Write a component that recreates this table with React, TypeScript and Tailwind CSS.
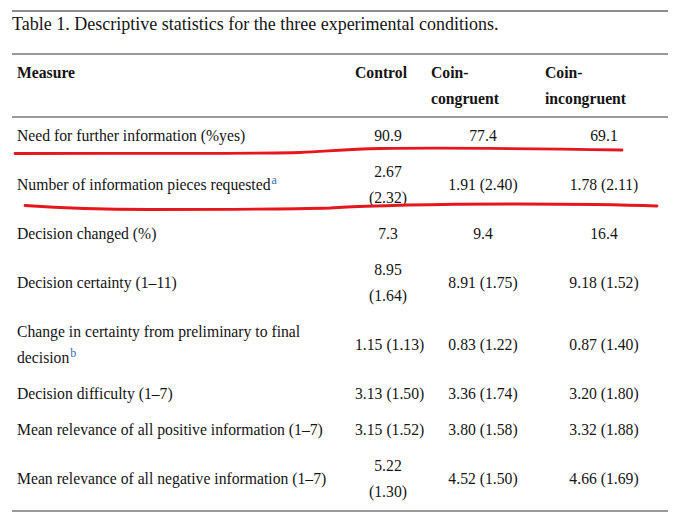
import React from 'react';

type Row = {
  measure: React.ReactNode;
  values: string[][];
};

const Sup = ({ children }: { children: React.ReactNode }) => (
  <sup className="text-[12px] text-[#2f6db5] ml-[1px]">{children}</sup>
);

const rows: Row[] = [
  { measure: 'Need for further information (%yes)', values: [['90.9'], ['77.4'], ['69.1']] },
  {
    measure: (
      <>
        Number of information pieces requested<Sup>a</Sup>
      </>
    ),
    values: [['2.67', '(2.32)'], ['1.91 (2.40)'], ['1.78 (2.11)']],
  },
  { measure: 'Decision changed (%)', values: [['7.3'], ['9.4'], ['16.4']] },
  { measure: 'Decision certainty (1–11)', values: [['8.95', '(1.64)'], ['8.91 (1.75)'], ['9.18 (1.52)']] },
  {
    measure: (
      <>
        Change in certainty from preliminary to final
        <br />
        decision<Sup>b</Sup>
      </>
    ),
    values: [['1.15 (1.13)'], ['0.83 (1.22)'], ['0.87 (1.40)']],
  },
  { measure: 'Decision difficulty (1–7)', values: [['3.13 (1.50)'], ['3.36 (1.74)'], ['3.20 (1.80)']] },
  { measure: 'Mean relevance of all positive information (1–7)', values: [['3.15 (1.52)'], ['3.80 (1.58)'], ['3.32 (1.88)']] },
  { measure: 'Mean relevance of all negative information (1–7)', values: [['5.22', '(1.30)'], ['4.52 (1.50)'], ['4.66 (1.69)']] },
];

// hand-drawn red underline marks over the first two rows
const Marks = () => (
  <svg className="absolute left-0 top-0 pointer-events-none" width="677" height="520" viewBox="0 0 677 520">
    <path
      d="M15 153.5 C120 153, 250 154, 300 152.5 C330 151, 350 149, 380 148.5 C460 147.5, 560 149, 622 150"
      fill="none"
      stroke="#e5161d"
      strokeWidth="2.8"
      strokeLinecap="round"
    />
    <path
      d="M25 205.5 C60 208, 100 209.5, 150 209.5 C220 209.5, 280 209.5, 330 208 C380 205, 440 204, 520 204 C590 204, 630 205, 657 206"
      fill="none"
      stroke="#e5161d"
      strokeWidth="2.8"
      strokeLinecap="round"
    />
  </svg>
);

export default function App() {
  return (
    <div
      className="relative w-[677px] h-[520px] bg-white text-[#141414] overflow-hidden"
      style={{ fontFamily: '"Liberation Serif", serif' }}
    >
      <div className="ml-[12px] mt-[10px] w-[656px]">
        <div className="border-t-2 border-[#8c8c8c] pt-0 pb-[17px] text-[18px] leading-[24px]">
          Table 1. Descriptive statistics for the three experimental conditions.
        </div>
        <table className="table-fixed w-full border-collapse text-[15.7px] leading-[26px]">
          <colgroup>
            <col className="w-[338px]" />
            <col className="w-[76px]" />
            <col className="w-[114px]" />
            <col className="w-[128px]" />
          </colgroup>
          <thead>
            <tr className="border-t-2 border-b-2 border-[#9a9a9a] font-bold align-top">
              <th className="px-[5px] pt-[5px] pb-[4px] text-left">Measure</th>
              <th className="px-[5px] pt-[5px] pb-[4px] text-left">Control</th>
              <th className="px-[5px] pt-[5px] pb-[4px] text-left">
                Coin-
                <br />
                congruent
              </th>
              <th className="px-[5px] pt-[5px] pb-[4px] text-left">
                Coin-
                <br />
                incongruent
              </th>
            </tr>
          </thead>
          <tbody className="border-b-2 border-[#9a9a9a]">
            {rows.map((r, i) => (
              <tr key={i} className="align-middle">
                <td className="px-[5px] py-[5px] text-left">{r.measure}</td>
                {r.values.map((v, j) => (
                  <td key={j} className="px-[5px] py-[5px] text-center whitespace-nowrap">
                    {v.map((line, k) => (
                      <div key={k}>{line}</div>
                    ))}
                  </td>
                ))}
              </tr>
            ))}
          </tbody>
        </table>
      </div>
      <Marks />
    </div>
  );
}
